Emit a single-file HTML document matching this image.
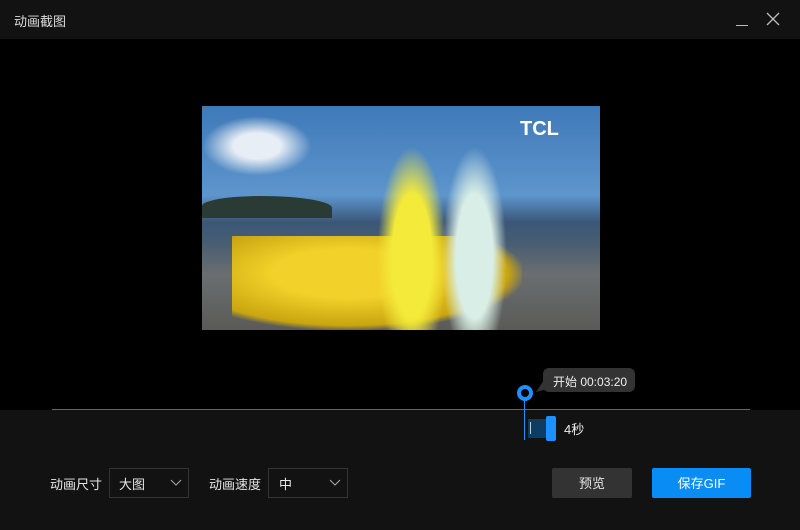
<!DOCTYPE html><html><head><meta charset="utf-8"><style>
*{margin:0;padding:0;box-sizing:border-box}
body{width:800px;height:530px;background:#121212;position:relative;overflow:hidden;font-family:"Liberation Sans","Noto Sans CJK SC",sans-serif;color:#e6e6e6;font-size:13px}
.a{position:absolute}
</style></head><body>
<div class="a" style="left:0;top:0;width:800px;height:39px;background:#121212"></div>
<div class="a" style="left:14px;top:11px;font-size:13px;color:#ddd">动画截图</div>
<div class="a" style="left:736px;top:25px;width:12px;height:1px;background:#bbb"></div>
<svg class="a" style="left:766px;top:12px" width="14" height="14"><path d="M1 1L13 13M13 1L1 13" stroke="#bbb" stroke-width="1.3"/></svg>
<div class="a" style="left:0;top:39px;width:800px;height:371px;background:#000"></div>
<div class="a" style="left:202px;top:106px;width:398px;height:224px;overflow:hidden;background:linear-gradient(#3f79b8 0%,#5d95cc 40%,#3a5678 52%,#4a5e72 62%,#6a6e70 75%,#5a5a58 100%)">
 <div class="a" style="left:0;top:10px;width:110px;height:60px;background:radial-gradient(ellipse,#e8eef5 30%,transparent 70%)"></div>
 <div class="a" style="left:0;top:90px;width:130px;height:22px;background:#2a3a35;border-radius:50% 60% 0 0"></div>
 <div class="a" style="left:30px;top:130px;width:290px;height:94px;background:radial-gradient(ellipse at 40% 40%,#f2d22a 30%,#c9a510 65%,transparent 72%)"></div>
 <div class="a" style="left:175px;top:40px;width:70px;height:184px;background:radial-gradient(ellipse at 50% 60%,#f4ea3a 40%,transparent 70%)"></div>
 <div class="a" style="left:240px;top:40px;width:65px;height:184px;background:radial-gradient(ellipse at 50% 60%,#d9eee6 40%,transparent 70%)"></div>
 <div class="a" style="left:318px;top:12px;font-weight:bold;font-size:20px;color:#fff">TCL</div>
</div>
<div class="a" style="left:52px;top:409px;width:698px;height:1px;background:#666"></div>
<div class="a" style="left:543px;top:368px;width:92px;height:24px;background:#333;border-radius:6px;font-size:12px;color:#eee;padding:5px 0 0 10px">开始 00:03:20</div>
<svg class="a" style="left:536px;top:380px" width="10" height="12"><path d="M8 0L8 10L0 12Z" fill="#333"/></svg>
<div class="a" style="left:524px;top:393px;width:1px;height:47px;background:#1e90ff"></div>
<div class="a" style="left:517px;top:385px;width:16px;height:16px;border-radius:50%;border:4px solid #1e90ff;background:#000"></div>
<div class="a" style="left:528px;top:419px;width:20px;height:19px;background:#0d3d62"></div>
<div class="a" style="left:530px;top:422px;width:1px;height:12px;background:#ccc"></div>
<div class="a" style="left:546px;top:416px;width:10px;height:25px;background:#1e90ff;border-radius:2px"></div>
<div class="a" style="left:564px;top:419px;color:#eee">4秒</div>
<div class="a" style="left:50px;top:474px">动画尺寸</div>
<div class="a" style="left:109px;top:468px;width:80px;height:30px;border:1px solid #333;padding:5px 0 0 9px">大图</div>
<svg class="a" style="left:170px;top:479px" width="12" height="8"><path d="M1 1L6 6L11 1" stroke="#aaa" fill="none"/></svg>
<div class="a" style="left:209px;top:474px">动画速度</div>
<div class="a" style="left:268px;top:468px;width:80px;height:30px;border:1px solid #333;padding:5px 0 0 10px">中</div>
<svg class="a" style="left:329px;top:479px" width="12" height="8"><path d="M1 1L6 6L11 1" stroke="#aaa" fill="none"/></svg>
<div class="a" style="left:552px;top:468px;width:80px;height:30px;background:#333;border-radius:2px;text-align:center;line-height:31px">预览</div>
<div class="a" style="left:652px;top:468px;width:99px;height:30px;background:#0a8cf5;border-radius:2px;text-align:center;line-height:31px;color:#fff">保存GIF</div>
</body></html>
